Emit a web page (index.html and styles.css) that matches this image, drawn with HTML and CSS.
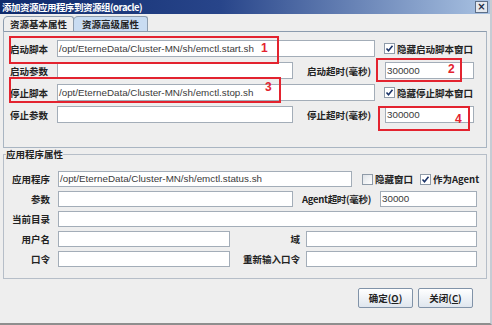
FILE: index.html
```html
<!DOCTYPE html>
<html lang="zh-CN">
<head>
    <meta charset="UTF-8">
    <title>添加资源应用程序到资源组(oracle)</title>
    <link rel="stylesheet" href="styles.css">
</head>
<body>
    <div class="window">
        <div class="titlebar">
            <span class="title">添加资源应用程序到资源组(oracle)</span>
            <span class="close">×</span>
        </div>

        <div class="tabs">
            <div class="tab">资源基本属性</div>
            <div class="tab active">资源高级属性</div>
        </div>

        <div class="tabpanel">
            <div class="row">
                <label class="lbl">启动脚本</label>
                <div class="field w-long">/opt/EterneData/Cluster-MN/sh/emctl.start.sh</div>
                <span class="check checked"></span>
                <span class="check-text">隐藏启动脚本窗口</span>
            </div>
            <div class="row">
                <label class="lbl">启动参数</label>
                <div class="field w-mid"></div>
                <span class="mid-lbl">启动超时(毫秒)</span>
                <div class="field w-small">300000</div>
            </div>
            <div class="row">
                <label class="lbl">停止脚本</label>
                <div class="field w-long">/opt/EterneData/Cluster-MN/sh/emctl.stop.sh</div>
                <span class="check checked"></span>
                <span class="check-text">隐藏停止脚本窗口</span>
            </div>
            <div class="row">
                <label class="lbl">停止参数</label>
                <div class="field w-mid"></div>
                <span class="mid-lbl">停止超时(毫秒)</span>
                <div class="field w-small">300000</div>
            </div>
        </div>

        <fieldset class="group">
            <legend>应用程序属性</legend>
            <div class="grow">
                <label class="glbl">应用程序</label>
                <div class="field g-app">/opt/EterneData/Cluster-MN/sh/emctl.status.sh</div>
                <span class="check g-check1"></span>
                <span class="check-text">隐藏窗口</span>
                <span class="check checked g-check2"></span>
                <span class="check-text">作为Agent</span>
            </div>
            <div class="grow">
                <label class="glbl">参数</label>
                <div class="field g-mid"></div>
                <span class="agent-lbl">Agent超时(毫秒)</span>
                <div class="field g-agent">30000</div>
            </div>
            <div class="grow">
                <label class="glbl">当前目录</label>
                <div class="field g-full"></div>
            </div>
            <div class="grow">
                <label class="glbl">用户名</label>
                <div class="field g-half"></div>
                <span class="half-lbl">域</span>
                <div class="field g-half2"></div>
            </div>
            <div class="grow">
                <label class="glbl">口令</label>
                <div class="field g-half"></div>
                <span class="half-lbl">重新输入口令</span>
                <div class="field g-half2"></div>
            </div>
        </fieldset>

        <div class="buttons">
            <button class="btn">确定(<u>O</u>)</button>
            <button class="btn">关闭(<u>C</u>)</button>
        </div>

        <!-- red annotation marks drawn over the dialog -->
        <div class="mark mark-1"><span>1</span></div>
        <div class="mark mark-2"><span>2</span></div>
        <div class="mark mark-3"><span>3</span></div>
        <div class="mark mark-4"><span>4</span></div>
    </div>
</body>
</html>
```

FILE: styles.css
```css
body {
    margin: 0;
    padding: 0;
    font-family: "Noto Sans CJK SC", "Liberation Sans", sans-serif;
    background-color: #eeeeee;
}
.window {
    position: relative;
    width: 492px;
    height: 325px;
    box-sizing: border-box;
    background-color: #eeeeee;
    border-bottom: 2px solid #8e8e8e;
    border-right: 2px solid #c6ccd4;
    overflow: hidden;
}
.titlebar {
    height: 14px;
    display: flex;
    align-items: center;
    justify-content: space-between;
    padding: 0 2px 0 2px;
    background: linear-gradient(to right, #0e2a6c 0%, #28458a 45%, #a9c2e2 100%);
}
.title {
    color: #ffffff;
    font-size: 9.5px;
    font-weight: bold;
    line-height: 14px;
    letter-spacing: -0.5px;
}
.close {
    width: 11px;
    height: 10px;
    border: 1px solid #5d6f88;
    background-color: #e4e8ee;
    color: #1d2b44;
    font-family: "DejaVu Sans", sans-serif;
    font-size: 10px;
    font-weight: bold;
    line-height: 10px;
    text-align: center;
}
.tabs {
    display: flex;
    margin-top: 2px;
    padding-left: 3px;
    height: 15px;
}
.tab {
    height: 14px;
    padding: 0 6px 0 6px;
    border: 1px solid #8c9cae;
    border-bottom: none;
    border-radius: 5px 3px 0 0;
    font-size: 9.5px;
    font-weight: bold;
    line-height: 14px;
    color: #222222;
    background-color: #eeeeee;
}
.tab.active {
    margin-left: -1px;
    padding: 0 8px 0 8px;
    background-color: #c9dcf2;
}
.tabpanel {
    margin: 0 3px;
    height: 117px;
    box-sizing: border-box;
    padding: 8px 0 0 6px;
    border: 1px solid #a9b5c2;
    border-top-color: #8c9cae;
    display: flex;
    flex-direction: column;
    gap: 5px;
}
.row {
    display: flex;
    align-items: center;
    height: 17px;
}
.lbl {
    width: 47px;
    font-size: 9.5px;
    font-weight: bold;
    color: #222222;
}
.field {
    height: 17px;
    box-sizing: border-box;
    border: 1px solid #a3adb8;
    background-color: #ffffff;
    padding-left: 1px;
    font-family: "Liberation Sans", Arial, sans-serif;
    font-size: 9.8px;
    line-height: 15px;
    color: #3a3a3a;
    white-space: nowrap;
    overflow: hidden;
}
.w-long { width: 318px; }
.w-mid { width: 236px; }
.w-small { width: 89px; }
.mid-lbl {
    width: 92px;
    text-align: center;
    font-size: 9.5px;
    font-weight: bold;
    color: #222222;
}
.check {
    width: 11px;
    height: 11px;
    box-sizing: border-box;
    margin-left: 9px;
    margin-right: 2px;
    border: 1px solid #8f9ba8;
    background: linear-gradient(135deg, #dfe3e8, #ffffff);
}
.check.checked {
    background: #ffffff url("data:image/svg+xml;utf8,<svg xmlns='http://www.w3.org/2000/svg' width='9' height='9'><path d='M1.5 4.5 L3.5 6.8 L7.5 1.8' fill='none' stroke='%231c3468' stroke-width='1.6'/></svg>") center no-repeat;
}
.check-text {
    font-size: 9.5px;
    font-weight: bold;
    color: #222222;
}
.group {
    margin: 0 3px;
    padding: 11px 0 11px 2px;
    border: 1px solid #b6bec8;
    display: flex;
    flex-direction: column;
    gap: 4px;
}
.group legend {
    padding: 0;
    font-size: 9.5px;
    font-weight: bold;
    line-height: 12px;
    color: #222222;
}
.grow {
    display: flex;
    align-items: center;
    height: 16px;
}
.grow .field {
    height: 16px;
    line-height: 14px;
}
.glbl {
    width: 44px;
    margin-right: 8px;
    text-align: right;
    font-size: 9.5px;
    font-weight: bold;
    color: #222222;
}
.g-app { width: 294px; }
.g-check1 { margin-left: 10px; }
.g-check2 { margin-left: 7px; }
.g-mid { width: 235px; }
.agent-lbl {
    width: 87px;
    text-align: center;
    font-size: 9.5px;
    font-weight: bold;
    color: #222222;
    letter-spacing: -0.3px;
}
.g-agent { width: 97px; }
.g-full { width: 419px; }
.g-half { width: 172px; }
.g-half2 { width: 171px; }
.half-lbl {
    width: 70px;
    padding-right: 6px;
    text-align: right;
    font-size: 9.5px;
    font-weight: bold;
    color: #222222;
}
.buttons {
    display: flex;
    justify-content: flex-end;
    gap: 5px;
    margin-top: 9px;
    padding-right: 17px;
}
.btn {
    width: 55px;
    height: 20px;
    padding: 0;
    border: 1px solid #8193a8;
    border-radius: 2px;
    background: linear-gradient(to bottom, #ffffff, #dfe6ee);
    font-family: "Noto Sans CJK SC", sans-serif;
    font-size: 9.5px;
    font-weight: bold;
    color: #222222;
}
.mark {
    position: absolute;
    border: 2px solid #e3232f;
    box-sizing: border-box;
}
.mark span {
    position: absolute;
    color: #e3232f;
    font-family: "Liberation Sans", Arial, sans-serif;
    font-size: 12px;
    font-weight: bold;
    line-height: 12px;
}
.mark-1 { left: 9px; top: 36px; width: 270px; height: 28px; }
.mark-1 span { left: 250px; top: 4px; }
.mark-2 { left: 376px; top: 58px; width: 86px; height: 24px; }
.mark-2 span { left: 70px; top: 3px; }
.mark-3 { left: 9px; top: 77px; width: 272px; height: 26px; }
.mark-3 span { left: 254px; top: 2px; }
.mark-4 { left: 378px; top: 106px; width: 92px; height: 25px; }
.mark-4 span { left: 75px; top: 5px; }
```
